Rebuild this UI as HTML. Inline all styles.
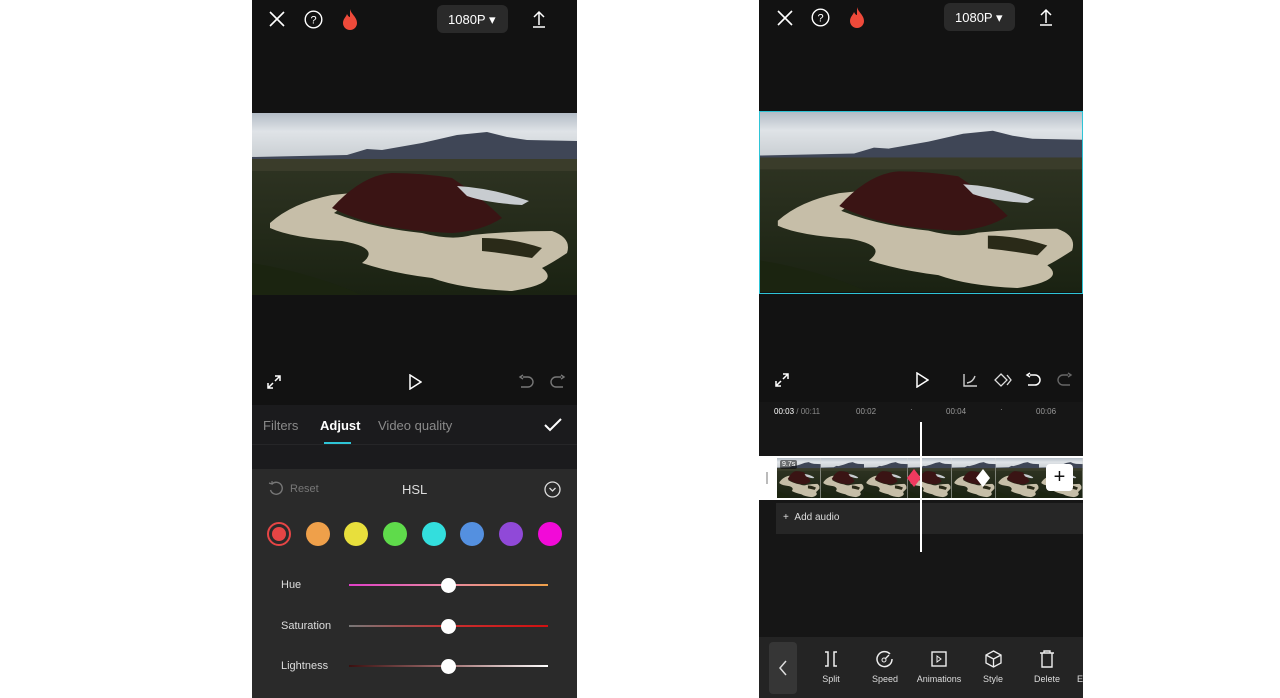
<!DOCTYPE html>
<html><head><meta charset="utf-8"><style>
*{margin:0;padding:0;box-sizing:border-box}
body{width:1280px;height:698px;background:#fff;position:relative;overflow:hidden;font-family:"Liberation Sans",sans-serif}
.ph{position:absolute;top:0;height:698px;background:#121212;overflow:hidden}
.abs{position:absolute}
.t{color:#fff;position:absolute;white-space:nowrap}
.dot{position:absolute;width:24px;height:24px;border-radius:50%;top:522px}
.track{position:absolute;height:2px;left:97px;width:199px}
.knob{position:absolute;width:15px;height:15px;border-radius:50%;background:#fff;left:189px}
.tool{position:absolute;top:648px;width:50px;text-align:center;color:#ddd;font-size:9px}
</style></head><body>
<svg width="0" height="0" style="position:absolute"><defs>
<linearGradient id="sky" x1="0" y1="0" x2="0" y2="1"><stop offset="0" stop-color="#b3bcc6"/><stop offset="0.4" stop-color="#dfe3e7"/><stop offset="1" stop-color="#c9ced2"/></linearGradient>
<linearGradient id="land" x1="0" y1="0" x2="0" y2="1"><stop offset="0" stop-color="#363a28"/><stop offset="1" stop-color="#1a2212"/></linearGradient>
<symbol id="scene" viewBox="0 0 325 182" preserveAspectRatio="none">
<rect width="325" height="182" fill="url(#land)"/>
<rect width="325" height="46" fill="url(#sky)"/>
<path d="M0 44 L95 42 L115 36 L130 37 L170 30 L205 22 L235 19 L255 24 L275 27 L325 28 L325 48 L0 48Z" fill="#3f4656"/>
<rect y="46" width="325" height="12" fill="#3a3c2a"/>
<path d="M18 110 Q40 90 80 82 L100 80 Q90 95 82 100 Q120 115 170 120 Q200 128 220 122 Q260 118 300 118 Q320 125 315 140 Q300 150 290 155 Q310 170 260 178 Q210 176 180 165 Q140 160 110 150 Q130 135 90 128 Q40 125 18 115Z" fill="#c6bea8"/>
<path d="M80 95 Q110 62 140 60 Q170 60 200 65 Q230 85 250 105 Q230 118 200 120 Q150 118 120 110 Q95 103 80 95Z" fill="#3a1414"/>
<path d="M205 73 Q240 75 277 88 L270 92 Q235 90 215 83Z" fill="#c8ccd0"/>
<path d="M230 125 Q260 125 290 135 L280 145 Q250 140 230 138Z" fill="#2a2a18"/>
<path d="M0 150 Q60 160 110 182 L0 182Z" fill="#1b2410"/>
</symbol>
</defs></svg>

<!-- LEFT PHONE -->
<div class="ph" style="left:252px;width:325px">
<svg class="abs" style="left:17px;top:11px" width="16" height="16" viewBox="0 0 16 16"><path d="M1 1L15 15M15 1L1 15" stroke="#fff" stroke-width="1.6"/></svg>
<svg class="abs" style="left:52px;top:10px" width="19" height="19" viewBox="0 0 19 19"><circle cx="9.5" cy="9.5" r="8.3" fill="none" stroke="#fff" stroke-width="1.4"/><text x="9.5" y="13.5" font-size="11" fill="#fff" text-anchor="middle" font-family="Liberation Sans">?</text></svg>
<svg class="abs" style="left:89px;top:8px" width="18" height="22" viewBox="0 0 18 22"><path d="M9 1C10 6 16 9 16 15a7 7 0 0 1-14 0c0-4 3-6 4-9 1 2 2 3 3 3 0-3 0-6 0-8z" fill="#ee4a3a"/></svg>
<div class="abs" style="left:185px;top:5px;width:71px;height:28px;background:#2a2a2a;border-radius:6px"></div>
<div class="t" style="left:196px;top:12px;font-size:13px">1080P ▾</div>
<svg class="abs" style="left:280px;top:10px" width="14" height="18" viewBox="0 0 14 18"><path d="M7 15V2M2 7L7 2L12 7M1 17H13" stroke="#fff" stroke-width="1.5" fill="none"/></svg>
<svg class="abs" style="left:0;top:113px" width="325" height="182"><use href="#scene"/></svg>
<svg class="abs" style="left:15px;top:375px" width="14" height="14" viewBox="0 0 14 14"><path d="M8 1H13V6M13 1L8 6M6 13H1V8M1 13L6 8" stroke="#fff" stroke-width="1.5" fill="none"/></svg>
<svg class="abs" style="left:156px;top:374px" width="14" height="16" viewBox="0 0 14 16"><path d="M2 1L13 8L2 15Z" stroke="#fff" stroke-width="1.5" fill="none"/></svg>
<svg class="abs" style="left:266px;top:374px" width="16" height="16" viewBox="0 0 16 16"><path d="M5 3H10A4 4 0 0 1 10 13H3M5 1L2 3L5 5" stroke="#777" stroke-width="1.4" fill="none"/></svg>
<svg class="abs" style="left:298px;top:374px" width="16" height="16" viewBox="0 0 16 16"><path d="M11 3H6A4 4 0 0 0 6 13H13M11 1L14 3L11 5" stroke="#777" stroke-width="1.4" fill="none"/></svg>
<div class="abs" style="left:0;top:405px;width:325px;height:64px;background:#1b1b1d"></div>
<div class="abs" style="left:0;top:444px;width:325px;height:1px;background:#262628"></div>
<div class="t" style="left:11px;top:418px;font-size:13px;color:#8a8a8a">Filters</div>
<div class="t" style="left:68px;top:418px;font-size:13px;font-weight:bold">Adjust</div>
<div class="abs" style="left:72px;top:442px;width:27px;height:2px;background:#2ec4d6"></div>
<div class="t" style="left:126px;top:418px;font-size:13px;color:#8a8a8a">Video quality</div>
<svg class="abs" style="left:292px;top:418px" width="18" height="14" viewBox="0 0 18 14"><path d="M1 7L6 12L17 1" stroke="#fff" stroke-width="2" fill="none"/></svg>
<div class="abs" style="left:0;top:469px;width:325px;height:229px;background:#2a2a2a"></div>
<svg class="abs" style="left:16px;top:481px" width="16" height="16" viewBox="0 0 16 16"><path d="M4 3A6 6 0 1 1 2.5 9" stroke="#777" stroke-width="1.4" fill="none"/><path d="M1 2L4 3L4 0" stroke="#777" stroke-width="1.2" fill="none"/></svg>
<div class="t" style="left:38px;top:483px;font-size:11px;color:#777">Reset</div>
<div class="t" style="left:150px;top:482px;font-size:13px;color:#ddd">HSL</div>
<svg class="abs" style="left:292px;top:481px" width="17" height="17" viewBox="0 0 17 17"><circle cx="8.5" cy="8.5" r="7.5" fill="none" stroke="#ddd" stroke-width="1.3"/><path d="M5.5 7L8.5 10L11.5 7" stroke="#ddd" stroke-width="1.3" fill="none"/></svg>
<div class="dot" style="left:15px;border:2px solid #e64545;background:#2a2a2a"><div style="position:absolute;left:3px;top:3px;width:14px;height:14px;border-radius:50%;background:#e64545"></div></div>
<div class="dot" style="left:54px;background:#efa04a"></div>
<div class="dot" style="left:92px;background:#e8df3c"></div>
<div class="dot" style="left:131px;background:#5fdb4b"></div>
<div class="dot" style="left:170px;background:#33dedd"></div>
<div class="dot" style="left:208px;background:#5490e0"></div>
<div class="dot" style="left:247px;background:#9049d8"></div>
<div class="dot" style="left:286px;background:#f20ad8"></div>
<div class="t" style="left:29px;top:579px;font-size:11px;color:#ddd">Hue</div>
<div class="track" style="top:584px;background:linear-gradient(90deg,#e03fc8,#e88aa0,#efa04a)"></div>
<div class="knob" style="top:578px"></div>
<div class="t" style="left:29px;top:620px;font-size:11px;color:#ddd">Saturation</div>
<div class="track" style="top:625px;background:linear-gradient(90deg,#777,#c83030,#d01010)"></div>
<div class="knob" style="top:619px"></div>
<div class="t" style="left:29px;top:660px;font-size:11px;color:#ddd">Lightness</div>
<div class="track" style="top:665px;background:linear-gradient(90deg,#3a1010,#a07070,#fff)"></div>
<div class="knob" style="top:659px"></div>
</div>

<!-- RIGHT PHONE -->
<div class="ph" style="left:759px;width:324px">
<svg class="abs" style="left:18px;top:10px" width="16" height="16" viewBox="0 0 16 16"><path d="M1 1L15 15M15 1L1 15" stroke="#fff" stroke-width="1.6"/></svg>
<svg class="abs" style="left:52px;top:8px" width="19" height="19" viewBox="0 0 19 19"><circle cx="9.5" cy="9.5" r="8.3" fill="none" stroke="#fff" stroke-width="1.4"/><text x="9.5" y="13.5" font-size="11" fill="#fff" text-anchor="middle" font-family="Liberation Sans">?</text></svg>
<svg class="abs" style="left:89px;top:6px" width="18" height="22" viewBox="0 0 18 22"><path d="M9 1C10 6 16 9 16 15a7 7 0 0 1-14 0c0-4 3-6 4-9 1 2 2 3 3 3 0-3 0-6 0-8z" fill="#ee4a3a"/></svg>
<div class="abs" style="left:185px;top:3px;width:71px;height:28px;background:#2a2a2a;border-radius:6px"></div>
<div class="t" style="left:196px;top:10px;font-size:13px">1080P ▾</div>
<svg class="abs" style="left:280px;top:8px" width="14" height="18" viewBox="0 0 14 18"><path d="M7 15V2M2 7L7 2L12 7M1 17H13" stroke="#fff" stroke-width="1.5" fill="none"/></svg>
<svg class="abs" style="left:1px;top:112px" width="322" height="180"><use href="#scene"/></svg>
<div class="abs" style="left:0;top:111px;width:324px;height:183px;border:1.5px solid #2ec4d6"></div>
<svg class="abs" style="left:16px;top:373px" width="14" height="14" viewBox="0 0 14 14"><path d="M8 1H13V6M13 1L8 6M6 13H1V8M1 13L6 8" stroke="#fff" stroke-width="1.5" fill="none"/></svg>
<svg class="abs" style="left:156px;top:372px" width="14" height="16" viewBox="0 0 14 16"><path d="M2 1L13 8L2 15Z" stroke="#fff" stroke-width="1.5" fill="none"/></svg>
<svg class="abs" style="left:204px;top:373px" width="15" height="14" viewBox="0 0 15 14"><path d="M1 1V13H14M4 10Q10 9 12 3" stroke="#ccc" stroke-width="1.4" fill="none"/></svg>
<svg class="abs" style="left:233px;top:372px" width="20" height="16" viewBox="0 0 20 16"><path d="M9 2L15 8L9 14L3 8Z M15 3L19 8L15 13" stroke="#ddd" stroke-width="1.3" fill="none"/></svg>
<svg class="abs" style="left:266px;top:372px" width="16" height="16" viewBox="0 0 16 16"><path d="M5 3H10A4 4 0 0 1 10 13H3M5 1L2 3L5 5" stroke="#fff" stroke-width="1.5" fill="none"/></svg>
<svg class="abs" style="left:298px;top:372px" width="16" height="16" viewBox="0 0 16 16"><path d="M11 3H6A4 4 0 0 0 6 13H13M11 1L14 3L11 5" stroke="#666" stroke-width="1.4" fill="none"/></svg>
<div class="abs" style="left:0;top:402px;width:324px;height:235px;background:#161616"></div>
<div class="t" style="left:15px;top:407px;font-size:8px;color:#fff">00:03 <span style="color:#888">/ 00:11</span></div>
<div class="t" style="left:97px;top:407px;font-size:8px;color:#999">00:02</div>
<div class="t" style="left:151px;top:405px;font-size:8px;color:#999">·</div>
<div class="t" style="left:187px;top:407px;font-size:8px;color:#999">00:04</div>
<div class="t" style="left:241px;top:405px;font-size:8px;color:#999">·</div>
<div class="t" style="left:277px;top:407px;font-size:8px;color:#999">00:06</div>
<div class="abs" style="left:0;top:456px;width:324px;height:44px;background:#fff"></div>
<div class="abs" style="left:7px;top:472px;width:2px;height:12px;background:#bbb"></div>
<div class="abs" style="left:18px;top:458px;width:306px;height:40px;display:flex;overflow:hidden">
<svg width="45" height="40"><use href="#scene"/></svg><svg width="45" height="40"><use href="#scene"/></svg><svg width="45" height="40"><use href="#scene"/></svg><svg width="45" height="40"><use href="#scene"/></svg><svg width="45" height="40"><use href="#scene"/></svg><svg width="45" height="40"><use href="#scene"/></svg><svg width="45" height="40"><use href="#scene"/></svg>
</div>
<div class="t" style="left:21px;top:460px;font-size:7px;background:rgba(0,0,0,.5);padding:1px 2px;border-radius:2px">9.7s</div>
<svg class="abs" style="left:147px;top:468px" width="16" height="20" viewBox="0 0 16 20"><path d="M8 1L15 10L8 19L1 10Z" fill="#f03a5f"/></svg>
<svg class="abs" style="left:216px;top:468px" width="16" height="20" viewBox="0 0 16 20"><path d="M8 1L15 10L8 19L1 10Z" fill="#fff"/></svg>
<div class="abs" style="left:287px;top:464px;width:27px;height:27px;background:#fff;border-radius:4px;color:#111;font-size:20px;text-align:center;line-height:26px">+</div>
<div class="abs" style="left:17px;top:503px;width:307px;height:31px;background:#262626"></div>
<div class="t" style="left:24px;top:512px;font-size:10px;color:#ddd">+ &nbsp;Add audio</div>
<div class="abs" style="left:161px;top:422px;width:2px;height:130px;background:#fff"></div>
<div class="abs" style="left:0;top:637px;width:324px;height:61px;background:#242424"></div>
<div class="abs" style="left:10px;top:642px;width:28px;height:52px;background:#363636;border-radius:4px"></div>
<svg class="abs" style="left:19px;top:660px" width="10" height="16" viewBox="0 0 10 16"><path d="M8 1L2 8L8 15" stroke="#ddd" stroke-width="1.5" fill="none"/></svg>
<svg class="abs" style="left:65px;top:651px" width="14" height="16" viewBox="0 0 14 16"><path d="M1 1H4V15H1M13 1H10V15H13" stroke="#eee" stroke-width="1.5" fill="none"/></svg>
<div class="tool" style="left:47px;top:674px">Split</div>
<svg class="abs" style="left:117px;top:650px" width="18" height="18" viewBox="0 0 18 18"><path d="M14 4A7.5 7.5 0 1 0 16 9" stroke="#eee" stroke-width="1.5" fill="none"/><circle cx="8" cy="10" r="2" stroke="#eee" fill="none"/><path d="M9.5 8.5L13 5" stroke="#eee" stroke-width="1.3"/></svg>
<div class="tool" style="left:101px;top:674px">Speed</div>
<svg class="abs" style="left:172px;top:651px" width="16" height="16" viewBox="0 0 16 16"><rect x="1" y="1" width="14" height="14" stroke="#eee" stroke-width="1.4" fill="none"/><path d="M6 5L10 8L6 11Z" stroke="#eee" fill="none"/></svg>
<div class="tool" style="left:155px;top:674px">Animations</div>
<svg class="abs" style="left:226px;top:650px" width="17" height="18" viewBox="0 0 17 18"><path d="M8.5 1L16 5V13L8.5 17L1 13V5Z M1 5L8.5 9L16 5 M8.5 9V17" stroke="#eee" stroke-width="1.3" fill="none"/></svg>
<div class="tool" style="left:209px;top:674px">Style</div>
<svg class="abs" style="left:280px;top:650px" width="16" height="18" viewBox="0 0 16 18"><path d="M1 3H15M3 3V17H13V3M5 3V1H11V3" stroke="#eee" stroke-width="1.4" fill="none"/></svg>
<div class="tool" style="left:263px;top:674px">Delete</div>
<div class="t" style="left:318px;top:674px;font-size:9px;color:#ddd">E</div>
</div>
</body></html>
